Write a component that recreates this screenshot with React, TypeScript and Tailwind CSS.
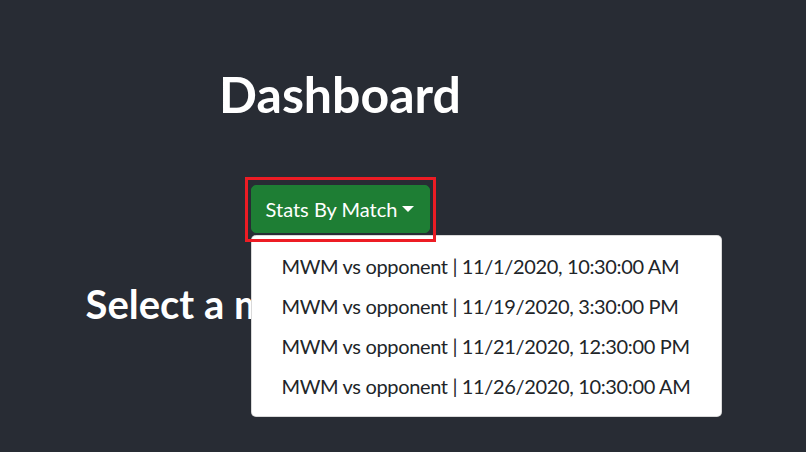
import React from "react";

const matches = [
  "MWM vs opponent | 11/1/2020, 10:30:00 AM",
  "MWM vs opponent | 11/19/2020, 3:30:00 PM",
  "MWM vs opponent | 11/21/2020, 12:30:00 PM",
  "MWM vs opponent | 11/26/2020, 10:30:00 AM",
];

export default function App() {
  return (
    <div
      className="min-h-screen w-full bg-[#282c34] text-white"
      style={{ fontFamily: 'Lato, "Noto Sans", sans-serif' }}
    >
      <div className="mx-auto w-[675px] px-[18px] pt-[64px]">
        <div className="flex w-[513px] justify-center">
          <h1 className="text-[50px] font-bold leading-[60px]">Dashboard</h1>
        </div>

        <div className="ml-[167px] mt-[61px]">
          <div className="relative inline-block">
            <button
              type="button"
              className="block h-[48px] w-[179px] rounded-[5px] border border-[#1e7e34] bg-[#1e7e34] py-[8px] text-center text-[20px] leading-[30px] text-white"
            >
              Stats By Match
              <span className="ml-[5px] inline-block align-[0.255em] border-x-[6px] border-b-0 border-t-[6px] border-x-transparent border-t-white" />
            </button>

            <div className="absolute left-0 top-[calc(100%+2px)] z-10 rounded-[5px] border border-black/15 bg-white py-[10px]">
              {matches.map((m) => (
                <div
                  key={m}
                  className="whitespace-nowrap px-[30px] py-[5px] text-[20px] leading-[30px] tracking-[-0.35px] text-[#212529]"
                >
                  {m}
                </div>
              ))}
            </div>

            <div className="pointer-events-none absolute -left-[6px] -top-[8px] z-20 h-[65px] w-[191px] border-[3px] border-[#ed1c24]" />
          </div>
        </div>

        <h2 className="ml-[2px] mt-[47px] text-[40px] font-bold leading-[48px]">
          Select a match
        </h2>
      </div>
    </div>
  );
}
